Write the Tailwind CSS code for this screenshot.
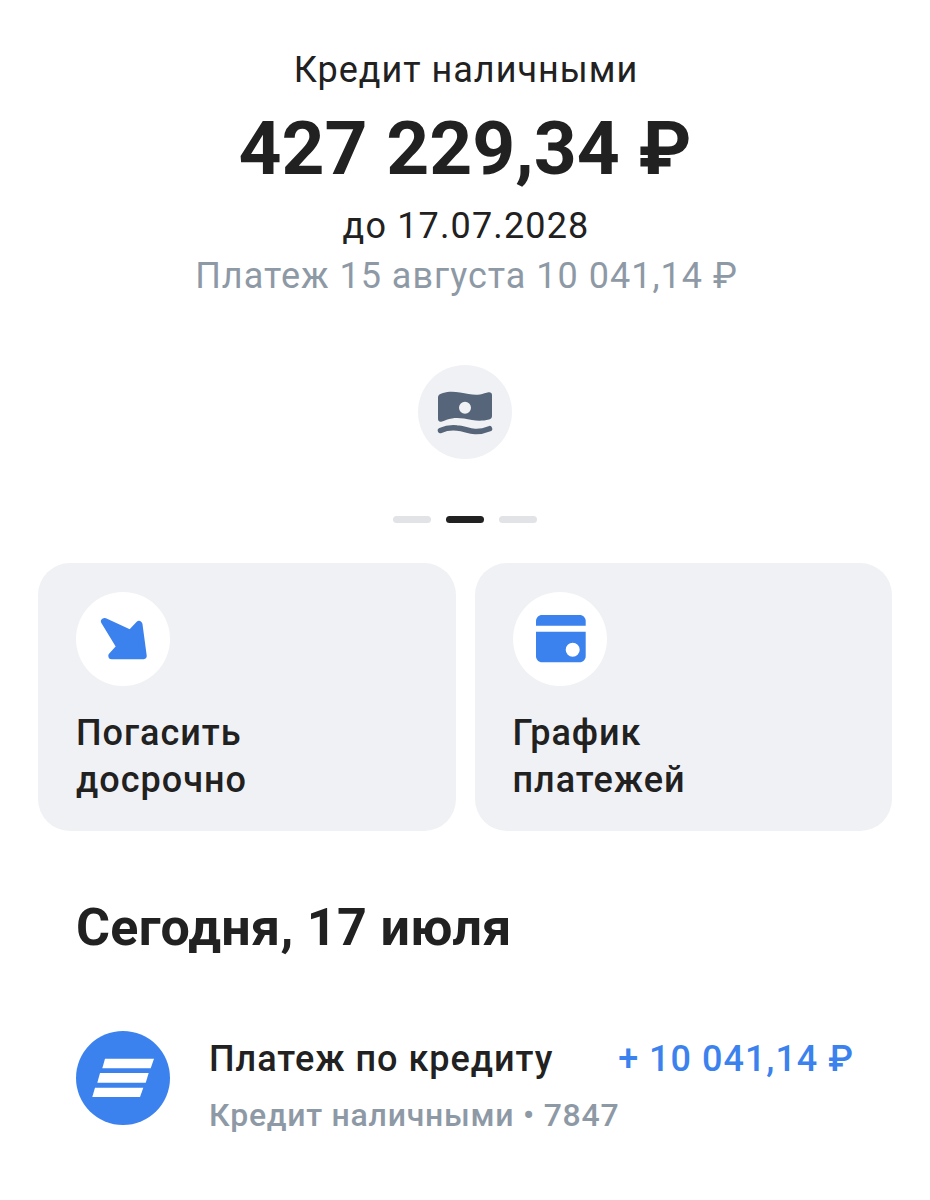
<!DOCTYPE html>
<html lang="ru">
<head>
<meta charset="utf-8">
<script src="https://cdn.jsdelivr.net/npm/@tailwindcss/browser@4"></script>
</head>
<body class="bg-white font-['Roboto',sans-serif] text-[#212121]">
<main class="w-[930px] h-[1200px] overflow-hidden">
  <section class="pt-[46px] flex flex-col items-center">
    <p class="pl-[2px] text-[36px] leading-[48px] tracking-[1px]">Кредит наличными</p>
    <p class="mt-[12px] text-[75px] leading-[84px] font-bold">427 229,34 ₽</p>
    <p class="mt-[11px] pl-[2px] text-[36px] leading-[51px] tracking-[1.15px]">до 17.07.2028</p>
    <p class="pl-[3px] text-[36px] leading-[48px] tracking-[1px] text-[#8e99a6]">Платеж 15 августа 10 041,14 ₽</p>
    <div class="mt-[65px] w-[94px] h-[94px] rounded-full bg-[#f0f1f5]">
      <svg width="94" height="94" viewBox="0 0 94 94">
        <path fill="#566579" fill-rule="evenodd" d="M25 28C30 26.500 36 26.500 42 27.500C50 29 56 30.500 62 29.500C65 29 68 27.800 70.500 27.300C72.500 26.900 74 28 74 30V51C74 53 73 54 71 54.500C65 56 60 56 54 55C46 53.500 40 52.500 34 53.500C30 54 27 55.500 24 56.500C21.500 57.200 20 56 20 54V32C20 30 22 28.800 25 28ZM47 36.700A6 6 0 1 0 47 48.700A6 6 0 1 0 47 36.700Z"/>
        <path fill="none" stroke="#566579" stroke-width="5.5" stroke-linecap="round" d="M22.500 65.500C28 63 34 62.500 39 63C46 63.500 50 66 57 66.500C62 66.800 67 65.500 71.500 63.700"/>
      </svg>
    </div>
    <div class="mt-[57px] flex gap-[15px]">
      <span class="w-[38px] h-[7px] rounded-full bg-[#e2e3e7]"></span>
      <span class="w-[38px] h-[7px] rounded-full bg-[#212121]"></span>
      <span class="w-[38px] h-[7px] rounded-full bg-[#e2e3e7]"></span>
    </div>
  </section>

  <section class="mt-[40px] px-[38px] grid grid-cols-2 gap-[19px]">
    <div class="h-[268px] rounded-[32px] bg-[#f0f1f5] pl-[38px] pt-[29px]">
      <div class="w-[94px] h-[94px] rounded-full bg-white">
        <svg width="94" height="94" viewBox="0 0 94 94">
          <path fill="#3b82ee" stroke="#3b82ee" stroke-width="7" stroke-linejoin="round" d="M28.500 29.500L54.500 41.500L63 32.500L67.200 63.800H35.800L44 55Z"/>
        </svg>
      </div>
      <p class="mt-[24px] text-[36px] leading-[47px] font-medium tracking-[1px]">Погасить<br>досрочно</p>
    </div>
    <div class="h-[268px] rounded-[32px] bg-[#f0f1f5] pl-[38px] pt-[29px]">
      <div class="w-[94px] h-[94px] rounded-full bg-white">
        <svg width="94" height="94" viewBox="0 0 94 94">
          <path fill="#3b82ee" d="M23 33.700V29C23 25.700 25.700 23 29 23H66.700C70 23 72.700 25.700 72.700 29V33.700Z"/>
          <path fill="#3b82ee" fill-rule="evenodd" d="M23 39.700H72.700V64.300C72.700 67.600 70 70.300 66.700 70.300H29C25.700 70.300 23 67.600 23 64.300ZM59.700 50.700A7 7 0 1 0 59.700 64.700A7 7 0 1 0 59.700 50.700Z"/>
        </svg>
      </div>
      <p class="mt-[24px] text-[36px] leading-[47px] font-medium tracking-[1px]">График<br>платежей</p>
    </div>
  </section>

  <h2 class="mt-[69px] pl-[76px] text-[52px] leading-[56px] font-bold tracking-[0.35px]">Сегодня, 17 июля</h2>

  <section class="mt-[75px] pl-[76px] pr-[76px] flex">
    <div class="w-[94px] h-[94px] shrink-0 rounded-full bg-[#3b82ee]">
      <svg width="94" height="94" viewBox="0 0 94 94" fill="#ffffff">
        <path d="M29 27.700H78L74.700 37.300H26.300Z"/>
        <path d="M24 42H72.700L69.700 51.700H21.300Z"/>
        <path d="M19 56.700H67.300L64 66H16.300Z"/>
      </svg>
    </div>
    <div class="ml-[39px] flex-1">
      <div class="flex justify-between text-[36px] leading-[56px] font-medium tracking-[1px]">
        <span>Платеж по кредиту</span>
        <span class="text-[#3b82ee]">+ 10 041,14 ₽</span>
      </div>
      <p class="text-[32px] leading-[56px] font-medium tracking-[0.75px] text-[#8e99a6]">Кредит наличными • 7847</p>
    </div>
  </section>
</main>
</body>
</html>
